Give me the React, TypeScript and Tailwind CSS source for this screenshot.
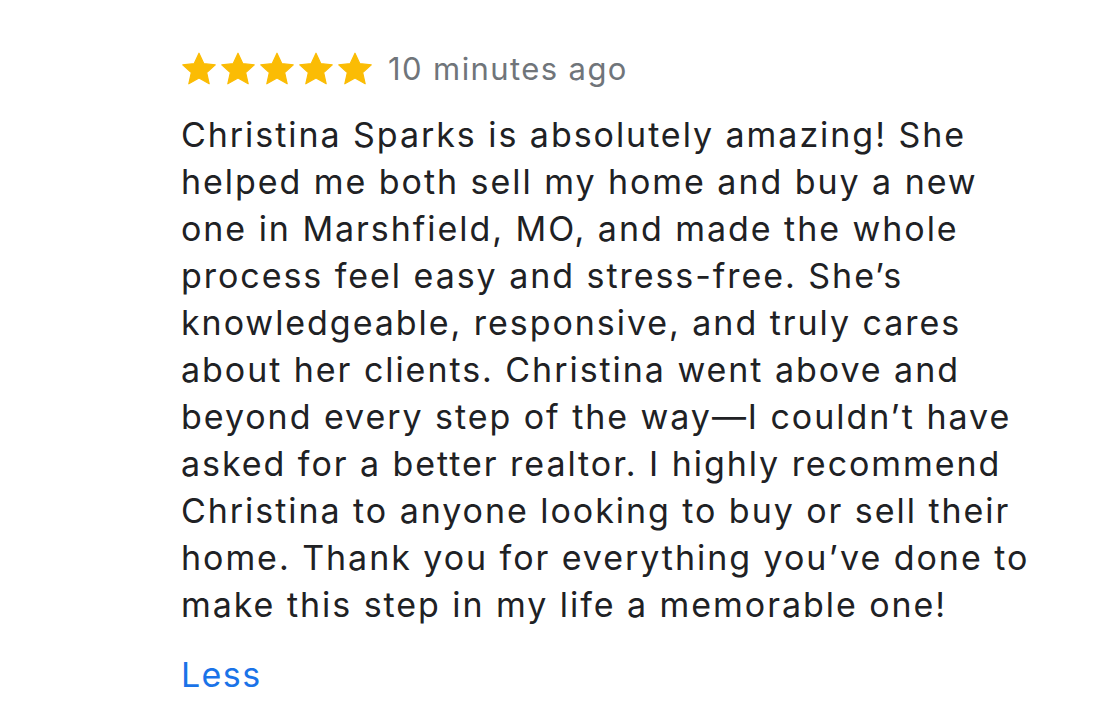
import React from "react";

const lines = [
  "Christina Sparks is absolutely amazing! She",
  "helped me both sell my home and buy a new",
  "one in Marshfield, MO, and made the whole",
  "process feel easy and stress-free. She\u2019s",
  "knowledgeable, responsive, and truly cares",
  "about her clients. Christina went above and",
  "beyond every step of the way\u2014I couldn\u2019t have",
  "asked for a better realtor. I highly recommend",
  "Christina to anyone looking to buy or sell their",
  "home. Thank you for everything you\u2019ve done to",
  "make this step in my life a memorable one!",
];

function Star() {
  return (
    <svg width="36" height="34" viewBox="0 0 24 23" className="block">
      <path
        d="M12 0.8l3.3 7.1 7.7 0.8-5.8 5.2 1.7 7.6L12 17.6l-6.9 3.9 1.7-7.6L1 8.7l7.7-0.8z"
        fill="#fbbc04"
        stroke="#fbbc04"
        strokeWidth="0.8"
        strokeLinejoin="round"
      />
    </svg>
  );
}

export default function App() {
  return (
    <div
      className="w-[1102px] h-[712px] bg-white overflow-hidden"
      style={{ fontFamily: "Inter, 'Noto Sans', sans-serif" }}
    >
      <div className="pl-[181px] pt-[50px]">
        <div className="flex items-center h-[38px]">
          <div className="flex gap-[3px]">
            <Star />
            <Star />
            <Star />
            <Star />
            <Star />
          </div>
          <span className="ml-[15px] text-[31px] text-[#70757a] tracking-[1.4px]">
            10 minutes ago
          </span>
        </div>
        <div className="mt-[23px] text-[34px] leading-[47px] text-[#202124] tracking-[1.95px]">
          {lines.map((l, i) => (
            <div key={i} className="whitespace-nowrap">
              {l}
            </div>
          ))}
        </div>
        <div className="mt-[23px] text-[34px] leading-[47px] text-[#1a73e8] tracking-[1.4px]">Less</div>
      </div>
    </div>
  );
}
